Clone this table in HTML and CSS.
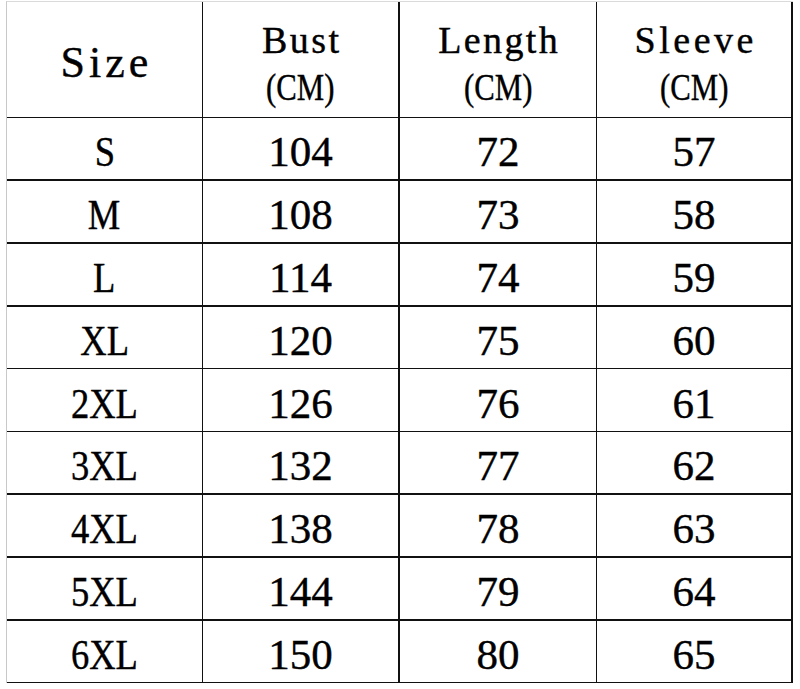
FILE: index.html
```html
<!DOCTYPE html>
<html lang="en">
<head>
<meta charset="utf-8">
<title>Size chart</title>
<link rel="stylesheet" href="styles.css">
</head>
<body>
<div class="chart">
  <div class="row head">
    <div class="c"><span class="size-title">Size</span></div>
    <div class="c col2"><span class="h">Bust</span><span class="unit">(CM)</span></div>
    <div class="c"><span class="h">Length</span><span class="unit">(CM)</span></div>
    <div class="c col4"><span class="h sleeve">Sleeve</span><span class="unit">(CM)</span></div>
  </div>
  <div class="row">
    <div class="c"><span class="lbl">S</span></div><div class="c col2">104</div><div class="c">72</div><div class="c col4">57</div>
  </div>
  <div class="row">
    <div class="c"><span class="lbl">M</span></div><div class="c col2">108</div><div class="c">73</div><div class="c col4">58</div>
  </div>
  <div class="row">
    <div class="c"><span class="lbl">L</span></div><div class="c col2">114</div><div class="c">74</div><div class="c col4">59</div>
  </div>
  <div class="row thin">
    <div class="c"><span class="lbl">XL</span></div><div class="c col2">120</div><div class="c">75</div><div class="c col4">60</div>
  </div>
  <div class="row thin">
    <div class="c"><span class="lbl">2XL</span></div><div class="c col2">126</div><div class="c">76</div><div class="c col4">61</div>
  </div>
  <div class="row">
    <div class="c"><span class="lbl">3XL</span></div><div class="c col2">132</div><div class="c">77</div><div class="c col4">62</div>
  </div>
  <div class="row">
    <div class="c"><span class="lbl">4XL</span></div><div class="c col2">138</div><div class="c">78</div><div class="c col4">63</div>
  </div>
  <div class="row">
    <div class="c"><span class="lbl">5XL</span></div><div class="c col2">144</div><div class="c">79</div><div class="c col4">64</div>
  </div>
  <div class="row thin">
    <div class="c"><span class="lbl">6XL</span></div><div class="c col2">150</div><div class="c">80</div><div class="c col4">65</div>
  </div>
</div>
</body>
</html>
```
FILE: styles.css
```css
html, body {
  margin: 0;
  padding: 0;
  background: #fff;
}

body {
  width: 800px;
  height: 689px;
  overflow: hidden;
  font-family: "Liberation Serif", "DejaVu Serif", serif;
  color: #000;
  -webkit-text-stroke: 0.4px #000;
}

.chart {
  margin: 1px 0 0 6px;
  width: 786px;
  display: grid;
  grid-template-columns: 196px 197px 197px 196px;
  grid-template-rows: 116px 63px 63px 63px 62px 63px 63px 63px 63px 62px;
  border-top: 1px solid #dadada;
  border-left: 1px solid #c9c9c9;
}

.row {
  display: contents;
}

.c {
  box-sizing: border-box;
  display: flex;
  flex-direction: column;
  align-items: center;
  justify-content: center;
  border-right: 1px solid #111;
  border-bottom: 2px solid #111;
  font-size: 43px;
  line-height: 1.15;
  padding-top: 7px;
  white-space: nowrap;
}

.c.col2,
.c.col4 {
  border-right-width: 2px;
}

.row.thin .c,
.row.head .c {
  border-bottom-width: 1px;
}

.row.head .c {
  padding-top: 8px;
}

.size-title {
  font-size: 44px;
  letter-spacing: 4px;
  margin-right: -4px;
}

.h,
.unit {
  display: block;
  font-size: 38px;
  line-height: 47px;
}

.h {
  letter-spacing: 2.4px;
  margin-right: -2.4px;
}

.h.sleeve {
  letter-spacing: 3.5px;
  margin-right: -3.5px;
}

.unit {
  transform: scaleX(0.81);
}

.lbl {
  display: inline-block;
  transform: scaleX(0.85);
}
```
